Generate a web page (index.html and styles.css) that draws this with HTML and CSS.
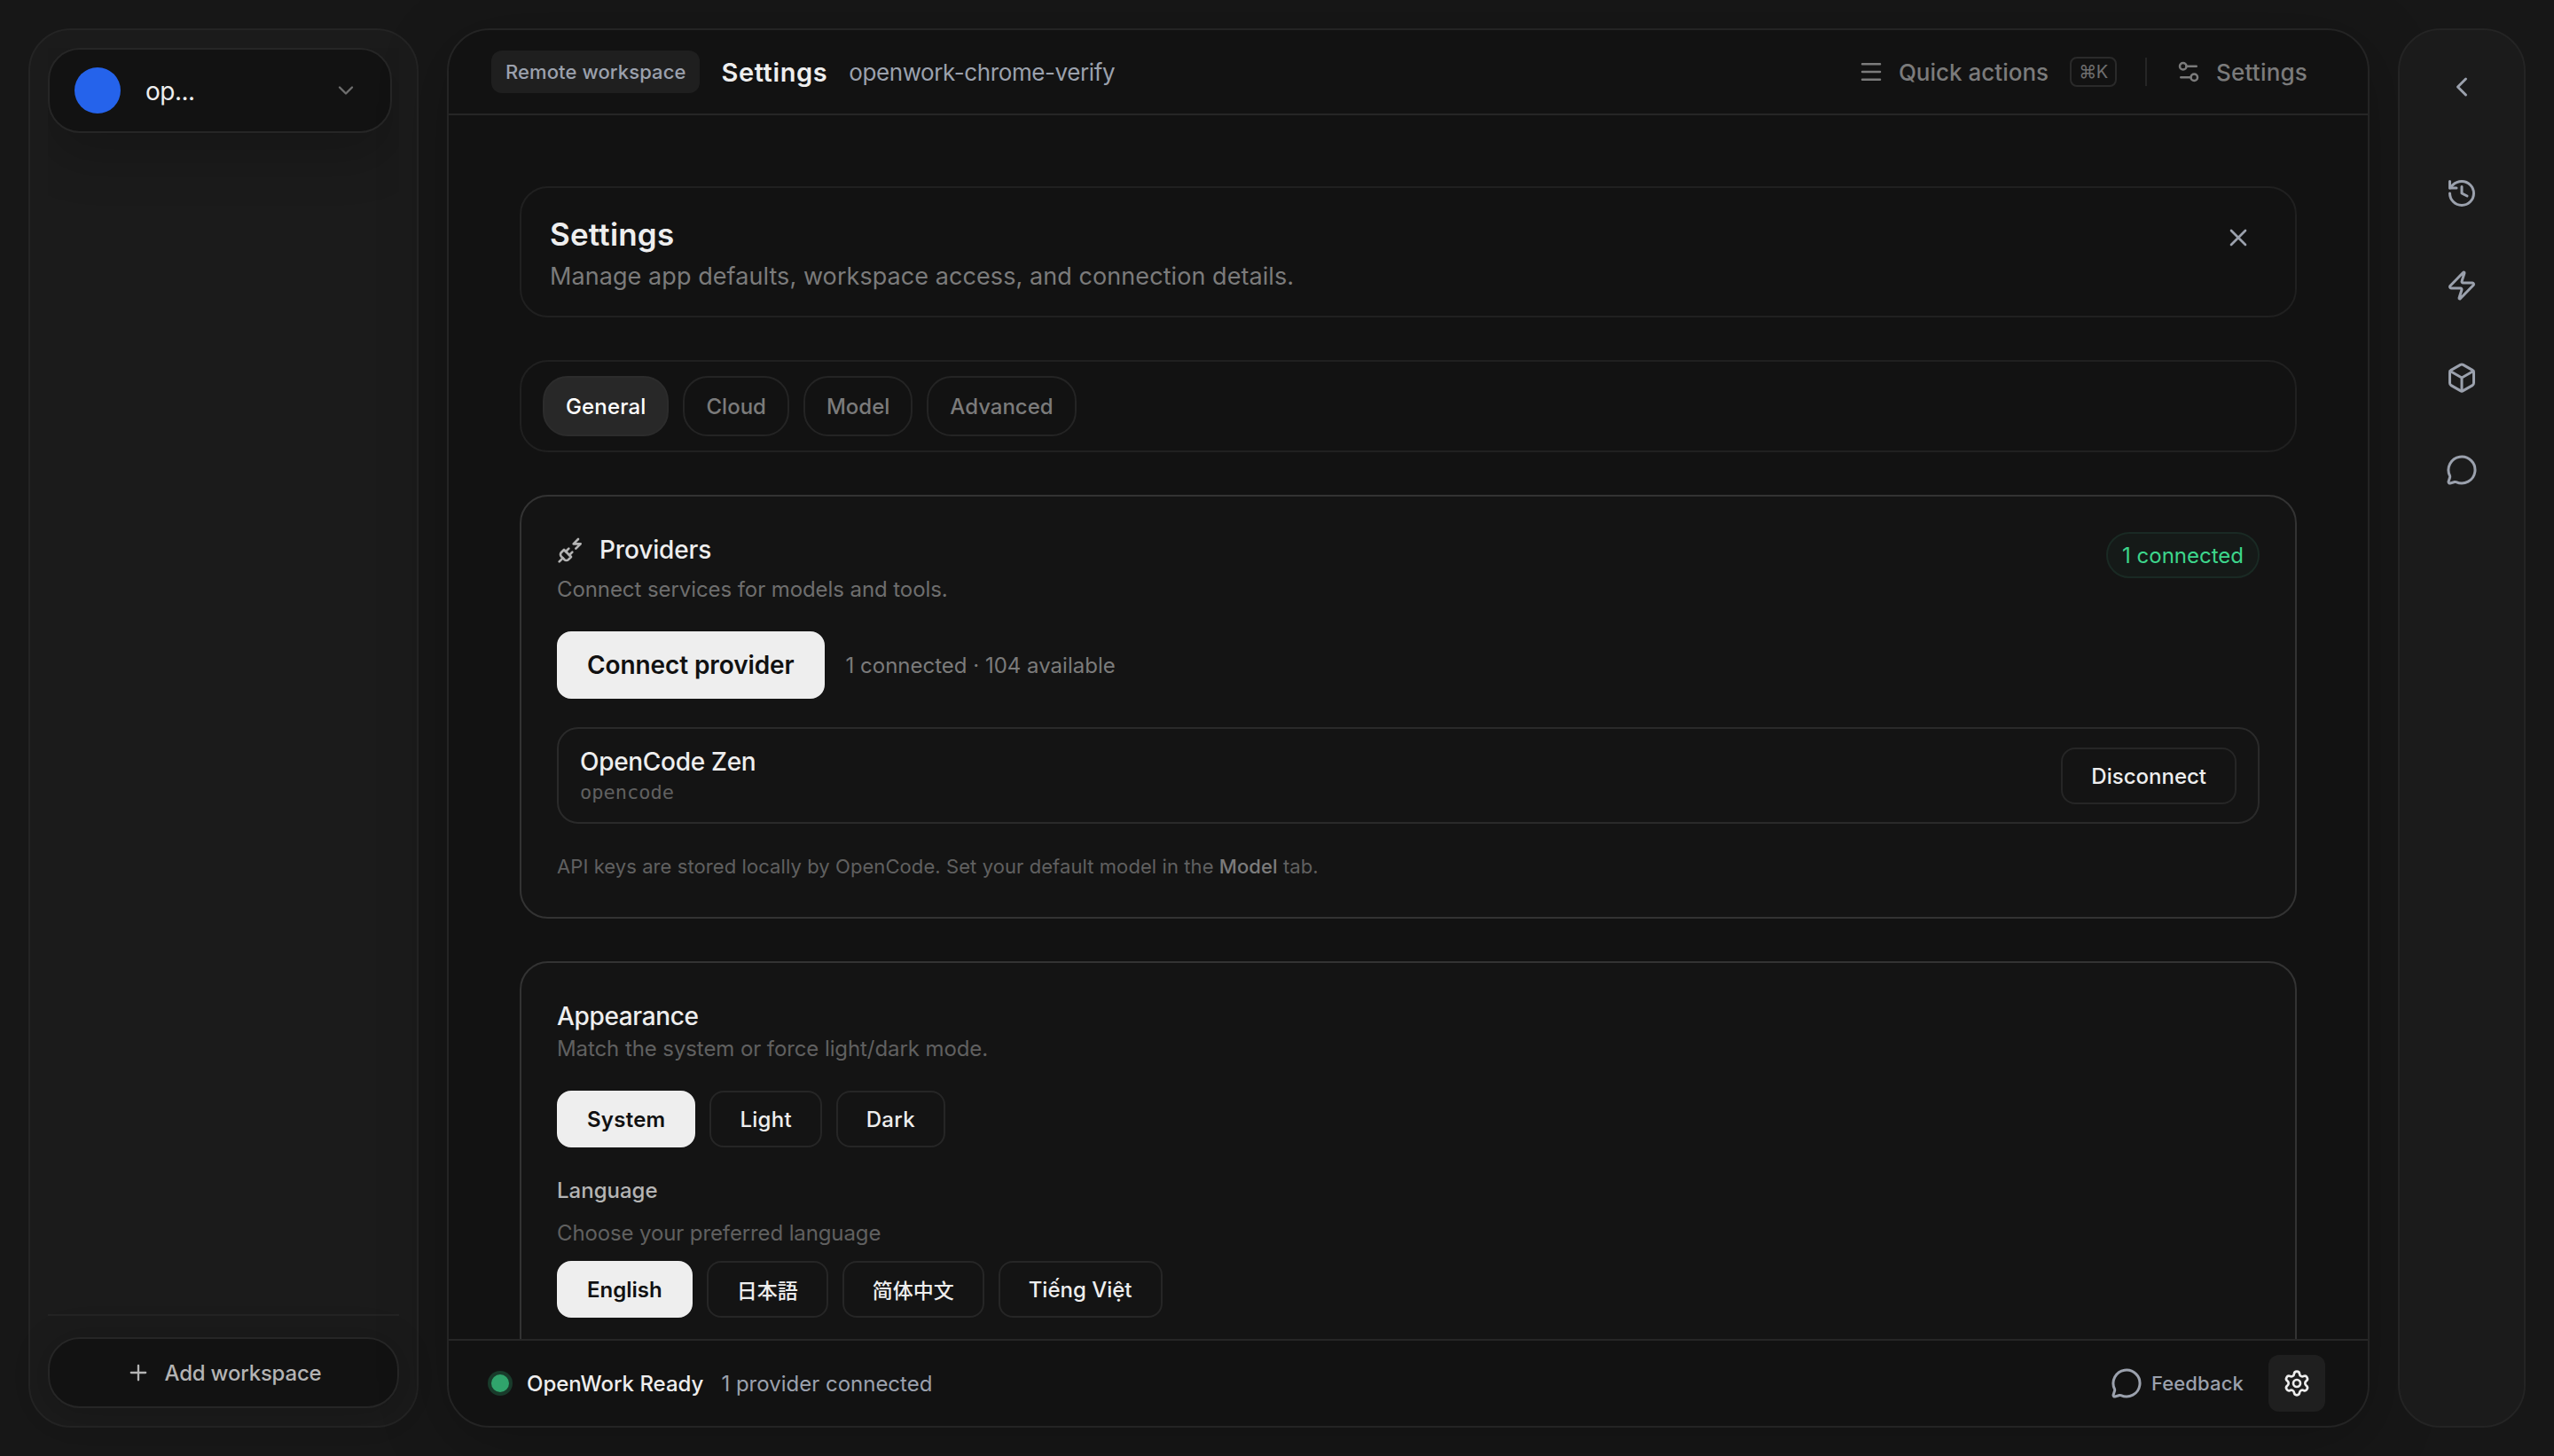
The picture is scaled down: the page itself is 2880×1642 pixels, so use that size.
FILE: index.html
```html
<!DOCTYPE html>
<html lang="en">
<head>
  <meta charset="UTF-8">
  <meta name="viewport" content="width=device-width, initial-scale=1.0">
  <title>OpenWork - Settings</title>
  <link rel="stylesheet" href="styles.css">
</head>
<body>
  <div class="app">

    <!-- Workspaces -->
    <aside class="sidebar">
      <div class="workspace-list">
        <button class="workspace">
          <span class="workspace-dot"></span>
          <span class="workspace-name">op...</span>
          <svg class="icon icon-sm" viewBox="0 0 24 24"><path d="m6 9 6 6 6-6"/></svg>
        </button>
      </div>
      <div class="sidebar-footer">
        <button class="add-workspace">
          <svg class="icon icon-sm" viewBox="0 0 24 24"><path d="M5 12h14M12 5v14"/></svg>
          <span>Add workspace</span>
        </button>
      </div>
    </aside>

    <main class="main">
      <header class="topbar">
        <span class="tag">Remote workspace</span>
        <h1 class="topbar-title">Settings</h1>
        <span class="topbar-name">openwork-chrome-verify</span>
        <div class="topbar-actions">
          <button class="link">
            <svg class="icon icon-md" viewBox="0 0 24 24"><path d="M4 5h16M4 12h16M4 19h16"/></svg>
            <span class="quick-label">Quick actions</span>
            <kbd class="kbd">⌘K</kbd>
          </button>
          <span class="separator"></span>
          <button class="link">
            <svg class="icon icon-md" viewBox="0 0 24 24"><path d="M14 17H5M19 7h-9"/><circle cx="17" cy="17" r="3"/><circle cx="7" cy="7" r="3"/></svg>
            <span class="settings-label">Settings</span>
          </button>
        </div>
      </header>

      <div class="content">
        <section class="panel head">
          <div>
            <h2 class="head-title">Settings</h2>
            <p class="head-text">Manage app defaults, workspace access, and connection details.</p>
          </div>
          <button class="close">
            <svg class="icon" viewBox="0 0 24 24"><path d="M18 6 6 18M6 6l12 12"/></svg>
          </button>
        </section>

        <nav class="panel tabs">
          <button class="tab active">General</button>
          <button class="tab">Cloud</button>
          <button class="tab">Model</button>
          <button class="tab">Advanced</button>
        </nav>

        <section class="card providers">
          <div class="card-head">
            <div>
              <h3 class="card-title">
                <svg class="icon" viewBox="0 0 24 24"><path d="M6.3 20.3a2.4 2.4 0 0 0 3.4 0L12 18l-6-6-2.3 2.3a2.4 2.4 0 0 0 0 3.4Z"/><path d="m2 22 3-3M7.5 13.5 10 11M10.5 16.5 13 14M18 3l-4 4h6l-4 4"/></svg>
                Providers
              </h3>
              <p class="card-text">Connect services for models and tools.</p>
            </div>
            <span class="status-badge">1 connected</span>
          </div>
          <div class="connect-row">
            <button class="btn btn-primary btn-lg">Connect provider</button>
            <span class="connect-info">1 connected · 104 available</span>
          </div>
          <div class="provider">
            <div>
              <div class="provider-name">OpenCode Zen</div>
              <div class="provider-id">opencode</div>
            </div>
            <button class="btn disconnect">Disconnect</button>
          </div>
          <p class="note">API keys are stored locally by OpenCode. Set your default model in the <strong>Model</strong> tab.</p>
        </section>

        <section class="card appearance">
          <h3 class="appearance-title">Appearance</h3>
          <p class="appearance-text">Match the system or force light/dark mode.</p>
          <div class="btn-row theme-row">
            <button class="btn btn-primary">System</button>
            <button class="btn">Light</button>
            <button class="btn">Dark</button>
          </div>
          <h4 class="language-title">Language</h4>
          <p class="language-text">Choose your preferred language</p>
          <div class="btn-row">
            <button class="btn btn-primary">English</button>
            <button class="btn btn-cjk" lang="ja">日本語</button>
            <button class="btn btn-cjk" lang="zh">简体中文</button>
            <button class="btn" lang="vi">Tiếng Việt</button>
          </div>
        </section>
      </div>

      <footer class="statusbar">
        <span class="status-dot"></span>
        <span class="status-title">OpenWork Ready</span>
        <span class="status-text">1 provider connected</span>
        <button class="feedback">
          <svg class="icon icon-lg" viewBox="0 0 24 24"><path d="M2.992 16.342a2 2 0 0 1 .094 1.167l-1.065 3.29a1 1 0 0 0 1.236 1.168l3.413-.998a2 2 0 0 1 1.099.092 10 10 0 1 0-4.777-4.719"/></svg>
          <span>Feedback</span>
        </button>
        <button class="gear">
          <svg class="icon" viewBox="0 0 24 24"><path d="M9.671 4.136a2.34 2.34 0 0 1 4.659 0 2.34 2.34 0 0 0 3.319 1.915 2.34 2.34 0 0 1 2.33 4.033 2.34 2.34 0 0 0 0 3.831 2.34 2.34 0 0 1-2.33 4.033 2.34 2.34 0 0 0-3.319 1.915 2.34 2.34 0 0 1-4.659 0 2.34 2.34 0 0 0-3.32-1.915 2.34 2.34 0 0 1-2.33-4.033 2.34 2.34 0 0 0 0-3.831A2.34 2.34 0 0 1 6.35 6.051a2.34 2.34 0 0 0 3.319-1.915"/><circle cx="12" cy="12" r="3"/></svg>
        </button>
      </footer>
    </main>

    <!-- Collapsed right rail -->
    <aside class="rail">
      <button class="rail-btn"><svg class="icon icon-lg" viewBox="0 0 24 24"><path d="m15 18-6-6 6-6"/></svg></button>
      <div class="rail-nav">
        <button class="rail-btn"><svg class="icon icon-lg" viewBox="0 0 24 24"><path d="M3 12a9 9 0 1 0 9-9 9.75 9.75 0 0 0-6.74 2.74L3 8"/><path d="M3 3v5h5M12 7v5l4 2"/></svg></button>
        <button class="rail-btn"><svg class="icon icon-lg" viewBox="0 0 24 24"><path d="M4 14a1 1 0 0 1-.78-1.63l9.9-10.2a.5.5 0 0 1 .86.46l-1.92 6.02A1 1 0 0 0 13 10h7a1 1 0 0 1 .78 1.63l-9.9 10.2a.5.5 0 0 1-.86-.46l1.92-6.02A1 1 0 0 0 11 14z"/></svg></button>
        <button class="rail-btn"><svg class="icon icon-lg" viewBox="0 0 24 24"><path d="M21 8a2 2 0 0 0-1-1.73l-7-4a2 2 0 0 0-2 0l-7 4A2 2 0 0 0 3 8v8a2 2 0 0 0 1 1.73l7 4a2 2 0 0 0 2 0l7-4A2 2 0 0 0 21 16Z"/><path d="m3.3 7 8.7 5 8.7-5M12 22V12"/></svg></button>
        <button class="rail-btn"><svg class="icon icon-lg" viewBox="0 0 24 24"><path d="M2.992 16.342a2 2 0 0 1 .094 1.167l-1.065 3.29a1 1 0 0 0 1.236 1.168l3.413-.998a2 2 0 0 1 1.099.092 10 10 0 1 0-4.777-4.719"/></svg></button>
      </div>
    </aside>

  </div>
</body>
</html>
```
FILE: styles.css
```css
* {
  box-sizing: border-box;
  margin: 0;
  padding: 0;
}
body {
  background: #171717;
  color: #eeeeee;
  font-family: Inter, "Noto Sans CJK SC", sans-serif;
  font-size: 24px;
  overflow: hidden;
}
button {
  font: inherit;
  color: inherit;
  background: none;
  border: none;
  cursor: pointer;
}
.app {
  display: flex;
  gap: 32px;
  height: 1642px;
  padding: 32px;
}
.icon {
  width: 32px;
  height: 32px;
  flex-shrink: 0;
  fill: none;
  stroke: currentColor;
  stroke-width: 2;
  stroke-linecap: round;
  stroke-linejoin: round;
}
.icon-sm {
  width: 28px;
  height: 28px;
}
.icon-md {
  width: 30px;
  height: 30px;
}
.icon-lg {
  width: 36px;
  height: 36px;
}

/* left sidebar */
.sidebar {
  width: 440px;
  flex-shrink: 0;
  display: flex;
  flex-direction: column;
  padding: 20px;
  background: #1b1b1b;
  border: 2px solid #242424;
  border-radius: 48px;
}
.workspace-list {
  flex: 1;
  overflow: hidden;
}
.workspace {
  display: flex;
  align-items: center;
  width: 388px;
  height: 96px;
  padding: 0 36px 0 28px;
  background: #121212;
  border: 2px solid #262626;
  border-radius: 36px;
  box-shadow: 0 28px 56px rgba(0, 0, 0, 0.18);
}
.workspace-dot {
  width: 52px;
  height: 52px;
  border-radius: 50%;
  background: #2563eb;
}
.workspace-name {
  flex: 1;
  margin-left: 28px;
  font-size: 28px;
  letter-spacing: -0.5px;
  line-height: 40px;
  padding-top: 1px;
  text-align: left;
}
.workspace .icon {
  color: #6e6e6e;
}
.sidebar-footer {
  padding-top: 24px;
  border-top: 2px solid #242424;
}
.add-workspace {
  display: flex;
  align-items: center;
  justify-content: center;
  gap: 16px;
  width: 100%;
  height: 80px;
  background: #121212;
  border: 2px solid #262626;
  border-radius: 36px;
  box-shadow: 0 4px 40px rgba(0, 0, 0, 0.18);
  color: #b4b4b4;
  font-weight: 500;
  letter-spacing: -0.2px;
}

/* center */
.main {
  flex: 1;
  display: flex;
  flex-direction: column;
  overflow: hidden;
  background: #121212;
  border: 2px solid #242424;
  border-radius: 48px;
  box-shadow: 0 16px 80px rgba(0, 0, 0, 0.24);
}
.topbar {
  display: flex;
  align-items: center;
  height: 96px;
  padding: 0 68px 0 48px;
  border-bottom: 2px solid #262626;
}
.tag {
  padding: 0 16px;
  line-height: 48px;
  background: #1f1f1f;
  border-radius: 12px;
  color: #9ba1ad;
  font-size: 22px;
  font-weight: 500;
  letter-spacing: 0.1px;
}
.topbar-title {
  margin-left: 24px;
  font-size: 29px;
  font-weight: 600;
  letter-spacing: 0.6px;
  line-height: 40px;
  padding-top: 1px;
}
.topbar-name {
  margin-left: 24px;
  color: #9ba1ad;
  font-size: 26px;
  letter-spacing: -0.4px;
}
.topbar-actions {
  display: flex;
  align-items: center;
  margin-left: auto;
}
.link {
  display: flex;
  align-items: center;
  color: #7b7b7b;
  font-size: 26px;
  font-weight: 500;
}
.quick-label,
.settings-label {
  margin-left: 16px;
}
.settings-label {
  letter-spacing: 0.2px;
}
.kbd {
  margin-left: 24px;
  width: 53px;
  height: 34px;
  border: 2px solid #2a2a2a;
  border-radius: 8px;
  color: #6e6e6e;
  font-family: Inter, "DejaVu Sans", sans-serif;
  font-size: 20px;
  font-weight: 400;
  line-height: 30px;
  letter-spacing: -0.4px;
  text-align: center;
}
.separator {
  width: 2px;
  height: 32px;
  margin: 0 32px;
  background: #262626;
}
.content {
  flex: 1;
  min-height: 0;
  overflow: hidden;
  padding: 80px;
}
.panel {
  display: flex;
  border: 2px solid #202020;
  border-radius: 32px;
  margin-bottom: 48px;
}
.head {
  justify-content: space-between;
  height: 148px;
  padding: 28px 32px;
}
.head-title {
  font-size: 35px;
  font-weight: 600;
  letter-spacing: 0.2px;
  line-height: 48px;
}
.head-text {
  color: #7b7b7b;
  font-size: 27px;
  letter-spacing: 0.07px;
  line-height: 48px;
}
.close {
  display: flex;
  align-items: center;
  justify-content: center;
  width: 64px;
  height: 56px;
}
.close .icon {
  color: #9ba1ad;
}
.tabs {
  gap: 16px;
  height: 104px;
  padding: 16px 24px;
}
.tab {
  height: 68px;
  padding: 0 24px;
  border: 2px solid #242424;
  border-radius: 28px;
  color: #7b7b7b;
  font-weight: 500;
}
.tab.active {
  background: #282828;
  border-color: #2c2c2c;
  color: #ffffff;
  letter-spacing: 0.15px;
}
.card {
  padding: 40px;
  background: #141414;
  border: 2px solid #333333;
  border-radius: 32px;
  margin-bottom: 48px;
}
.providers {
  height: 478px;
}
.card-head {
  display: flex;
  justify-content: space-between;
  align-items: flex-start;
}
.card-title {
  display: flex;
  align-items: center;
  gap: 16px;
  font-size: 28px;
  font-weight: 500;
  letter-spacing: -0.15px;
  line-height: 40px;
}
.card-title .icon {
  color: #b4b4b4;
}
.card-text {
  margin-top: 9px;
  color: #6e6e6e;
  letter-spacing: -0.08px;
  line-height: 32px;
}
.status-badge {
  padding: 1px 16px 0;
  line-height: 47px;
  background: #151a18;
  border: 2px solid #1a2a24;
  border-radius: 26px;
  color: #3dd68c;
}
.connect-row {
  display: flex;
  align-items: center;
  margin-top: 31px;
}
.btn {
  height: 64px;
  padding: 0 32px;
  border: 2px solid #262626;
  border-radius: 16px;
  font-weight: 500;
}
.btn-primary {
  background: #eeeeee;
  border-color: #eeeeee;
  color: #111111;
  font-weight: 600;
}
.btn-lg {
  height: 76px;
  font-size: 28px;
  letter-spacing: -0.1px;
}
.btn-cjk {
  font-size: 23px;
}
.connect-info {
  margin-left: 24px;
  color: #7b7b7b;
}
.provider {
  display: flex;
  align-items: center;
  justify-content: space-between;
  height: 109px;
  margin-top: 32px;
  padding: 0 24px;
  border: 2px solid #2a2a2a;
  border-radius: 24px;
}
.provider-name {
  font-size: 28px;
  font-weight: 500;
  letter-spacing: -0.3px;
  line-height: 38px;
}
.provider-id {
  color: #606060;
  font-family: "DejaVu Sans Mono", monospace;
  font-size: 22px;
  line-height: 32px;
}
.disconnect {
  padding-top: 1px;
}
.note {
  margin-top: 32px;
  color: #606060;
  font-size: 22px;
  letter-spacing: 0.08px;
  line-height: 32px;
}
.note strong {
  font-weight: 500;
  color: #7b7b7b;
}
.appearance {
  height: 600px;
}
.appearance-title {
  font-size: 28px;
  font-weight: 500;
  letter-spacing: -0.35px;
  line-height: 40px;
}
.appearance-text {
  margin-top: 1px;
  color: #606060;
  letter-spacing: -0.09px;
  line-height: 32px;
}
.btn-row {
  display: flex;
  gap: 16px;
  margin-top: 31px;
}
.theme-row .btn {
  letter-spacing: 0.25px;
}
.language-title {
  margin-top: 33px;
  color: #b4b4b4;
  font-size: 24px;
  font-weight: 500;
  line-height: 32px;
}
.language-text {
  margin-top: 16px;
  color: #606060;
  letter-spacing: -0.12px;
  line-height: 32px;
}
.language-text + .btn-row {
  margin-top: 15px;
}

/* bottom status bar */
.statusbar {
  display: flex;
  align-items: center;
  height: 98px;
  padding: 0 48px;
  border-top: 2px solid #262626;
}
.status-dot {
  width: 20px;
  height: 20px;
  border-radius: 50%;
  background: #30a46c;
  box-shadow: 0 0 0 4px #193b2b;
}
.status-title {
  margin-left: 20px;
  font-weight: 500;
}
.status-text {
  margin-left: 20px;
  color: #9ba1ad;
}
.feedback {
  display: flex;
  align-items: center;
  gap: 10px;
  margin-left: auto;
  color: #9ba1ad;
  font-size: 22px;
  font-weight: 500;
  letter-spacing: 0.15px;
}
.gear {
  display: flex;
  align-items: center;
  justify-content: center;
  width: 64px;
  height: 64px;
  margin-left: 28px;
  background: #1f1f1f;
  border-radius: 12px;
}

/* right rail */
.rail {
  width: 144px;
  flex-shrink: 0;
  display: flex;
  flex-direction: column;
  align-items: center;
  padding-top: 24px;
  background: #1b1b1b;
  border: 2px solid #242424;
  border-radius: 48px;
  color: #9ba1ad;
}
.rail-btn {
  display: flex;
  align-items: center;
  justify-content: center;
  width: 80px;
  height: 80px;
}
.rail-nav {
  display: flex;
  flex-direction: column;
  gap: 24px;
  margin-top: 40px;
}
```
